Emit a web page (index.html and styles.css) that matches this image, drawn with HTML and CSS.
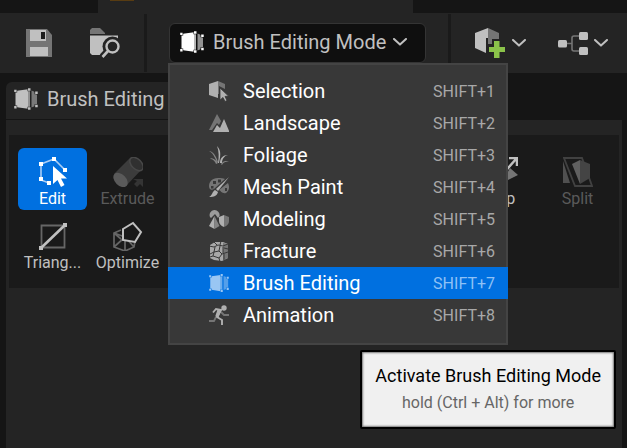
FILE: index.html
```html
<!DOCTYPE html>
<html lang="en">
<head>
<meta charset="utf-8">
<title>Brush Editing Mode</title>
<link rel="stylesheet" href="styles.css">
</head>
<body>
<svg class="sprite" aria-hidden="true">
  <symbol id="brush" viewBox="0 0 24 22">
    <path d="M1.500 4 3 2.800 14 1.300V20.800L3 19.200 1.500 18z" fill="currentColor"/>
    <path d="M14 1.500h2v19h-2z" fill="currentColor" opacity=".7"/>
    <path d="M17.500 2.500 20 3.500 23 7v9l-3 2.500-2.500 1z" fill="currentColor" opacity=".55"/>
    <g class="handle-edge"><path d="M0 1.200h3.200v3.300H0zM13.500 0h3.500v3.300h-3.500zM20.500 3h3.500v3.300h-3.500zM0 17.500h3.200v3.300H0zM13.500 18.700h3.500V22h-3.500zM20.500 16.300h3.500v3.300h-3.500z"/></g>
    <path d="M.2 1.700h2.400v2.400H.2zM14 .3h2.500v2.500H14zM21.200 3.400h2.500v2.500h-2.500zM.2 18h2.400v2.400H.2zM14 19.200h2.500v2.500H14zM21.200 16.800h2.500v2.500h-2.500z" fill="currentColor"/>
  </symbol>
  <symbol id="chevron" viewBox="0 0 14 8">
    <path d="M1 1l6 5.600L13 1" fill="none" stroke="currentColor" stroke-width="2" stroke-linecap="round" stroke-linejoin="round"/>
  </symbol>
</svg>

<div class="tab-strip"><div class="level-tab"><span class="tab-mark"></span></div></div>
<header class="toolbar">
  <button class="tool save" aria-label="Save">
    <svg width="30" height="30" viewBox="0 0 30 30"><path d="M2 1h21l5 6v22H2z" fill="#757575"/><path d="M6 2h16v11H6zM6 19h18v9H6z" fill="#c0c0c0"/><path d="M17 4h4v7h-4z" fill="#1c1c1c"/></svg>
  </button>
  <button class="tool browse" aria-label="Browse">
    <svg width="30" height="30" viewBox="0 0 30 30"><path d="M0 6V2L2 0h8l5 5v1z" fill="#757575"/><path d="M0 7.500h28V15H14v12H2L0 25z" fill="#c0c0c0"/><circle cx="22.500" cy="18.500" r="10" fill="#242424"/><path d="M19 21l-7 7.500" stroke="#242424" stroke-width="6"/><circle cx="22.500" cy="18.500" r="6" fill="none" stroke="#c0c0c0" stroke-width="2.400"/><path d="M18 23l-5.500 6" stroke="#c0c0c0" stroke-width="2.600"/></svg>
  </button>
  <span class="divider"></span>
  <div class="mode-picker">
    <button class="mode-button" aria-haspopup="menu" aria-expanded="true">
      <svg class="brush-icon bright" width="24" height="22"><use href="#brush"/></svg>
      <span>Brush Editing Mode</span>
      <svg class="chevron" width="14" height="8"><use href="#chevron"/></svg>
    </button>
    <div class="mode-menu" role="menu">
      <button class="mode-item" role="menuitem"><svg width="20" height="22" viewBox="0 0 20 22"><path d="M0 4 9 1v17L0 15z" fill="#b0b0b0"/><path d="M9 1l7 3v5l-6-3v8H9z" fill="#757575"/><path d="M11 8v12l3-2.500 2 4 2-1-2-4 3.500-.5z" fill="#b0b0b0" stroke="#383838" stroke-width=".8"/></svg><span>Selection</span><kbd>SHIFT+1</kbd></button>
      <button class="mode-item" role="menuitem"><svg width="20" height="22" viewBox="0 0 20 22"><path d="M0 18 8 2l4 7-2 4-2-2-5 7z" fill="#757575"/><path d="M4 20l4-7 3 3 4-9 5.500 13z" fill="#b0b0b0"/></svg><span>Landscape</span><kbd>SHIFT+2</kbd></button>
      <button class="mode-item" role="menuitem"><svg width="20" height="22" viewBox="0 0 20 22"><path d="M8 18C5 12 4 9 0 7c4 0 7 5 9 11zM9 19C7 16 3 13 1 15c3 0 5 2 6 5zM12 20c2-3 5-4 8-2-4-1-6 1-7 3z" fill="#858585"/><path d="M8 2c5 5 3 11 2 17H9C10 13 10 7 8 2zM11 19c0-5 3-8 8-8-4 1-6 4-6 8z" fill="#b0b0b0"/></svg><span>Foliage</span><kbd>SHIFT+3</kbd></button>
      <button class="mode-item" role="menuitem"><svg width="20" height="22" viewBox="0 0 20 22"><path d="M9 2C3 2 0 6 0 10c0 3 2 5 5 3L16 3C14 2 12 2 9 2zM19 7c2 4 1 8-2 10-4 1-5-2-7-3z" fill="#757575"/><path d="M4 5h3v3H4zM9 3.500h3v3H9zM2 10h2.500v2.500H2zM16 12h2v3h-2z" fill="#383838"/><path d="M20 1 9 15l-2-2z" fill="#b0b0b0"/><path d="M6 14l3 2c-1 4-4 5-9 5 3-1 3-5 6-7z" fill="#b0b0b0"/></svg><span>Mesh Paint</span><kbd>SHIFT+4</kbd></button>
      <button class="mode-item" role="menuitem"><svg width="20" height="22" viewBox="0 0 20 22"><path d="M1 9a5 5 0 1 1 9.500-1L9 10 6 6 2 10z" fill="#9b9b9b"/><path d="M5.500 8v13L0 18z" fill="#b0b0b0"/><path d="M5.500 8v13l5-3z" fill="#858585"/><path d="M10 9l5-2v12q-5-2-5-6z" fill="#b0b0b0"/><path d="M15 7l5 2v4q0 4-5 6z" fill="#757575"/></svg><span>Modeling</span><kbd>SHIFT+5</kbd></button>
      <button class="mode-item" role="menuitem"><svg width="20" height="22" viewBox="0 0 20 22"><path d="M1 5 6 2l8 0 5 2v14l-6 3-8-1-4-2z" fill="#a8a8a8"/><path d="M14 3l5 1v14l-5 2z" fill="#757575"/><path d="M0 6l5 1 4-2 5 1 5-2M5 2l3 3M12 1l-1 4M6 7l-1 5-4 2M5 12l5-1 3 3-3 4-6-2 1-4M10 11l1-5M13 14l6-2M10 18l1 4M14 7v6M15 14v6M15 8l4 1M4 16l-3 1" fill="none" stroke="#383838" stroke-width="1"/></svg><span>Fracture</span><kbd>SHIFT+6</kbd></button>
      <button class="mode-item selected" role="menuitem"><svg class="brush-icon" width="20" height="20"><use href="#brush"/></svg><span>Brush Editing</span><kbd>SHIFT+7</kbd></button>
      <button class="mode-item" role="menuitem"><svg width="20" height="22" viewBox="0 0 20 22"><path d="M12 8l3 3h5M7 13l-2 4H0" fill="none" stroke="#757575" stroke-width="1.800"/><circle cx="15" cy="4" r="2.700" fill="#b0b0b0"/><path d="M4 8.500 7 5l5 1-4 7 5 3v5" fill="none" stroke="#b0b0b0" stroke-width="1.900"/><path d="M9 6h3l-3 7-2-1z" fill="#b0b0b0" stroke="#b0b0b0" stroke-width="1.200"/></svg><span>Animation</span><kbd>SHIFT+8</kbd></button>
    </div>
  </div>
  <span class="divider"></span>
  <button class="tool create" aria-label="Add to project">
    <svg width="30" height="30" viewBox="0 0 30 30"><path d="M0 5 13 0v10h-2v15L0 20z" fill="#c0c0c0"/><path d="M13 0l11 5v6h-7v5h-4z" fill="#757575"/><path d="M19 13h5.500v6H30v5h-5.500v6H19v-6h-5v-5h5z" fill="#8bc34a"/></svg>
    <svg class="chevron" width="14" height="8"><use href="#chevron"/></svg>
  </button>
  <button class="tool graph" aria-label="Blueprints">
    <svg width="30" height="30" viewBox="0 0 30 30"><path d="M8 15.500h6M21 8h-5q-2 0-2 2v11q0 2 2 2h5" fill="none" stroke="#757575" stroke-width="1.600"/><rect y="12" width="9" height="7.500" rx="1.500" fill="#c0c0c0"/><rect x="21" y="4" width="9" height="8" rx="1.500" fill="#c0c0c0"/><rect x="21" y="19" width="9" height="8" rx="1.500" fill="#c0c0c0"/></svg>
    <svg class="chevron" width="14" height="8"><use href="#chevron"/></svg>
  </button>
</header>

<main class="panel">
  <div class="panel-tab"><svg class="brush-icon" width="24" height="22"><use href="#brush"/></svg><h1>Brush Editing</h1></div>
  <div class="panel-body">
    <div class="palette">
      <button class="brush-tool active"><svg width="30" height="30" viewBox="0 0 30 30"><path d="M3 7v16l8 3M3 7l13-5 11 11" fill="none" stroke="#a9cdf5" stroke-width="1.600"/><path d="M1 5h4v4H1zM14 0h4v4h-4zM25 11h4v4h-4zM1 20h4v4H1zM9 24h4v4H9z" fill="#fff"/><path d="M15 9v18l4.500-4 3.500 7 3.500-2-3.500-6.500h6z" fill="#fff"/></svg><span>Edit</span></button>
      <button class="brush-tool" disabled><svg width="30" height="30" viewBox="0 0 30 30"><path d="M1 17 17 1q4-2 8 1t5 9L13 29z" fill="#3c3c3c"/><ellipse cx="7.500" cy="23" rx="8.500" ry="5.500" transform="rotate(45 7.500 23)" fill="#5a5a5a"/><ellipse cx="23.500" cy="7" rx="8" ry="5" transform="rotate(45 23.500 7)" fill="#303030" stroke="#484848" stroke-width="1.500"/><path d="M20 22h10v8l-3-3-3 3-3-3 3-3z" fill="#343434"/></svg><span>Extrude</span></button>
      <button class="brush-tool flip"><svg width="30" height="30" viewBox="0 0 30 30"><path d="M14 18 28 2M21 1h8v8" fill="none" stroke="#c0c0c0" stroke-width="2.500"/><path d="M22 11l8 7-16 8z" fill="#757575"/></svg><span>Flip</span></button>
      <button class="brush-tool" disabled><svg width="30" height="30" viewBox="0 0 30 30"><path d="M0 4v22h7z" fill="#505050"/><path d="M1 1h18l10 28H12z" fill="none" stroke="#414141" stroke-width="1.800"/><path d="M9 7l8-4v24z" fill="#606060"/><path d="M17 3l10 4v14l-10 6z" fill="#444"/></svg><span>Split</span></button>
      <button class="brush-tool next-row"><svg width="30" height="30" viewBox="0 0 30 30"><path d="M3.500 4.500h23v22h-23z" fill="none" stroke="#666" stroke-width="1.800"/><path d="M3 27 27 4" stroke="#c0c0c0" stroke-width="2.600"/><path d="M1 25h4v4H1zM25 2h4v4h-4z" fill="#c0c0c0"/></svg><span>Triang...</span></button>
      <button class="brush-tool"><svg width="30" height="30" viewBox="0 0 30 30"><path d="M8 9 1 12v14l11 4 9-4 1-6M1 12l11 4v13M1 26l11-10 9 10M1 12l7 6" fill="none" stroke="#666" stroke-width="1.700"/><path d="M10 8 20 2l8 9-6 10-12-2z" fill="#1a1a1a" stroke="#c0c0c0" stroke-width="2"/></svg><span>Optimize</span></button>
    </div>
  </div>
</main>

<aside class="tooltip" role="tooltip"><p>Activate Brush Editing Mode</p><p class="hint">hold (Ctrl + Alt) for more</p></aside>
</body>
</html>
```
FILE: styles.css
```css
* { box-sizing: border-box; }

body {
  margin: 0;
  min-height: 100vh;
  display: flex;
  flex-direction: column;
  background: #151515;
  color: #c0c0c0;
  font-family: Roboto, "Liberation Sans", sans-serif;
  font-size: 20px;
  line-height: 24px;
}

button {
  margin: 0;
  padding: 0;
  border: 0;
  background: none;
  color: inherit;
  font: inherit;
}

svg { display: block; flex: none; }
.sprite { position: absolute; width: 0; height: 0; }
.handle-edge { fill: var(--edge, #242424); }

.tab-strip { height: 13px; padding-left: 98px; }
.level-tab { width: 315px; height: 13px; padding-left: 12px; background: #242424; }
.tab-mark { display: block; width: 24px; height: 1px; background: #583c12; }

.toolbar {
  display: flex;
  align-items: center;
  height: 60px;
  padding-left: 24px;
  background: #242424;
}
.tool { display: flex; align-items: center; gap: 7px; }
.graph { gap: 6px; }
.browse { margin: 0 24px 0 36px; }
.divider { width: 3px; height: 58px; background: #1a1a1a; }
.create { margin: 0 32px 0 24px; }

.mode-picker { position: relative; width: 257px; margin: 0 22px; }
.mode-button {
  --edge: #0f0f0f;
  display: flex;
  align-items: center;
  width: 100%;
  height: 40px;
  padding: 0 0 2px 10px;
  border: 1px solid #343434;
  border-radius: 6px;
  background: #0f0f0f;
}
.mode-button .chevron { margin-left: 7px; }
.mode-button span { margin-left: 9px; }
.bright { color: #fff; }

.mode-menu {
  position: absolute;
  z-index: 2;
  top: 40px;
  left: -1px;
  width: 340px;
  padding: 12px 0 14px;
  background: #383838;
  box-shadow: inset 0 0 0 2px #444;
}
.mode-item {
  display: flex;
  align-items: center;
  width: 100%;
  height: 32px;
  padding: 0 13px 0 41px;
  color: #fff;
  text-align: left;
}
.mode-item span { flex: 1; margin-left: 14px; }
.mode-item kbd { font: 16px Roboto, "Liberation Sans", sans-serif; color: #a8a8a8; }
.selected { --edge: #0070e0; background: #0070e0; }
.mode-item.selected kbd { color: #8fc1f5; }
.selected .brush-icon { color: #99c6f3; }

.panel { flex: 1; display: flex; flex-direction: column; margin: 9px 5px 0 6px; }
.panel-tab {
  display: flex;
  align-items: center;
  gap: 9px;
  width: 200px;
  height: 37px;
  padding: 0 0 3px 8px;
  border-radius: 6px 6px 0 0;
  background: #242424;
}
.panel-tab h1 { margin: 0; font: inherit; }
.panel-body { flex: 1; margin-top: 1px; padding: 15px 3px; background: #242424; }

.palette {
  display: grid;
  grid-template-columns: repeat(auto-fill, 69px);
  grid-auto-rows: 62px;
  gap: 2px 6px;
  padding: 13px 0 14px 9px;
  background: #1a1a1a;
}
.brush-tool {
  display: flex;
  flex-direction: column;
  align-items: center;
  padding-top: 9px;
  border-radius: 6px;
  font-size: 16px;
  line-height: 24px;
}
.brush-tool:disabled { color: #5a5a5a; }
.active { background: #0070e0; color: #fff; }
.flip { grid-column: 7; }
.next-row { grid-column: 1; }

.tooltip {
  position: absolute;
  z-index: 3;
  right: 11px;
  bottom: 19px;
  padding: 12px 13px;
  border: 2px solid #000;
  border-radius: 2px;
  background: #f0f0f0;
  box-shadow: inset 0 0 2px 1px #777;
  color: #000;
  font-size: 18px;
  text-align: center;
}
.tooltip p { margin: 0; }
.tooltip .hint { margin-top: 3px; color: #666; font-size: 16px; }
```
